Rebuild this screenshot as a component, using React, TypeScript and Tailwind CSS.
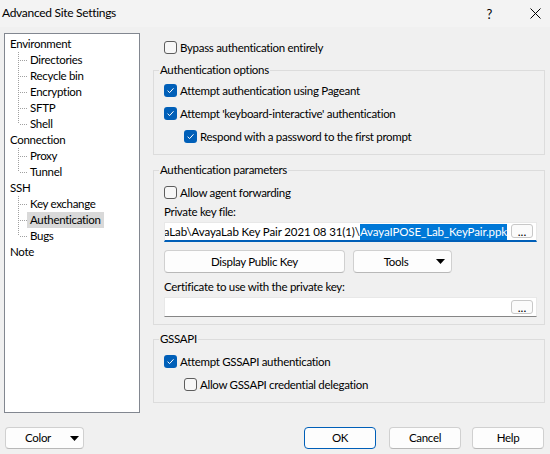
import React from "react";

function Check({ checked }: { checked?: boolean }) {
  return checked ? (
    <span className="w-[13px] h-[13px] rounded-[3px] bg-[#005fb8] flex items-center justify-center shrink-0">
      <svg width="9" height="9" viewBox="0 0 9 9">
        <path d="M1.6 4.7 L3.6 6.6 L7.5 2.3" stroke="white" strokeWidth="1" fill="none" />
      </svg>
    </span>
  ) : (
    <span className="w-[13px] h-[13px] rounded-[3px] border border-[#5d5d5d] bg-[#f7f7f7] shrink-0" />
  );
}

function Row({ checked, label, indent }: { checked?: boolean; label: string; indent?: boolean }) {
  return (
    <div className={indent ? "flex items-center h-[13px] pl-[20px]" : "flex items-center h-[13px]"}>
      <Check checked={checked} />
      <span className="ml-[3px] leading-[16px] whitespace-nowrap">{label}</span>
    </div>
  );
}

function Group({ label, className, children }: { label: string; className: string; children: React.ReactNode }) {
  return (
    <div className={"relative border border-[#dcdcdc] " + className}>
      <span className="absolute -top-[9px] left-[5px] px-[1px] bg-[#f0f0f0] leading-[16px] whitespace-nowrap">{label}</span>
      {children}
    </div>
  );
}

function Caret() {
  return (
    <svg width="9" height="5" viewBox="0 0 9 5">
      <path d="M0 0 H9 L4.5 5 Z" fill="#000" />
    </svg>
  );
}

function Dots() {
  return (
    <span className="w-[22px] h-[14px] mr-[3px] mb-[1px] rounded-[3px] border border-[#c8c8c8] bg-[#fbfbfb] flex items-end justify-center shrink-0 text-[12px] leading-[11px] tracking-normal">
      ...
    </span>
  );
}

function TreeRoot({ label }: { label: string }) {
  return <div className="h-[16px] flex items-center pl-[5px] leading-[16px]">{label}</div>;
}

function TreeChild({ label, last, selected }: { label: string; last?: boolean; selected?: boolean }) {
  return (
    <div className="h-[16px] flex items-center">
      <svg width="22" height="16" viewBox="0 0 22 16" className="shrink-0">
        {Array.from({ length: last ? 4 : 8 }).map((_, i) => (
          <rect key={"v" + i} x="13" y={i * 2} width="1" height="1" fill="#a0a0a0" />
        ))}
        {Array.from({ length: 4 }).map((_, i) => (
          <rect key={"h" + i} x={15 + i * 2} y="8" width="1" height="1" fill="#a0a0a0" />
        ))}
      </svg>
      <span className={selected ? "px-[3px] leading-[16px] bg-[#d9d9d9]" : "px-[3px] leading-[16px]"}>{label}</span>
    </div>
  );
}

export default function App() {
  return (
    <div className="w-[550px] h-[454px] bg-[#f0f0f0] flex flex-col text-[11.5px] tracking-[-0.3px] text-black font-['Lato',sans-serif] overflow-hidden">
      <div className="h-[27px] bg-[#f3f3f3] flex items-center pl-[2px] pr-[9px]">
        <span className="leading-[16px] -mt-[1px] text-[12px]">Advanced Site Settings</span>
        <span className="ml-auto mr-[38px] text-[13px] leading-[16px]">?</span>
        <svg width="11" height="11" viewBox="0 0 11 11">
          <path d="M0.5 0.5 L10.5 10.5 M10.5 0.5 L0.5 10.5" stroke="#000" strokeWidth="1" />
        </svg>
      </div>

      <div className="flex items-start">
        <div className="ml-[4px] mt-[6px] w-[136px] h-[380px] border border-[#828790] bg-white pt-[2px]">
          <TreeRoot label="Environment" />
          <TreeChild label="Directories" />
          <TreeChild label="Recycle bin" />
          <TreeChild label="Encryption" />
          <TreeChild label="SFTP" />
          <TreeChild label="Shell" last />
          <TreeRoot label="Connection" />
          <TreeChild label="Proxy" />
          <TreeChild label="Tunnel" last />
          <TreeRoot label="SSH" />
          <TreeChild label="Key exchange" />
          <TreeChild label="Authentication" selected />
          <TreeChild label="Bugs" last />
          <TreeRoot label="Note" />
        </div>

        <div className="ml-[13px] w-[392px] pt-[14px] flex flex-col">
          <div className="pl-[11px]">
            <Row label="Bypass authentication entirely" />
          </div>

          <Group label="Authentication options" className="mt-[16px] h-[85px] pt-[13px] pl-[10px] flex flex-col gap-[10px]">
            <Row checked label="Attempt authentication using Pageant" />
            <Row checked label="Attempt 'keyboard-interactive' authentication" />
            <Row checked indent label="Respond with a password to the first prompt" />
          </Group>

          <Group label="Authentication parameters" className="mt-[15px] h-[155px] pt-[15px] pl-[10px] pr-[7px] flex flex-col">
            <Row label="Allow agent forwarding" />
            <div className="mt-[5px] h-[16px] leading-[16px]">Private key file:</div>
            <div className="mt-[2px] h-[20px] bg-white border-t border-x border-[#e8e8e8] border-b-2 border-b-[#005fb8] flex items-center">
              <div className="flex-1 min-w-0 overflow-hidden flex justify-end whitespace-nowrap pl-[1px] pr-[4px] tracking-[-0.12px]">
                <span className="leading-[16px]">aLab\AvayaLab Key Pair 2021 08 31(1)\</span>
                <span className="leading-[16px] bg-[#0078d7] text-white">AvayaIPOSE_Lab_KeyPair.ppk</span>
              </div>
              <Dots />
            </div>
            <div className="mt-[8px] h-[23px] flex">
              <div className="w-[181px] h-[23px] rounded-[4px] border border-[#d0d0d0] border-b-[#b8b8b8] bg-[#fdfdfd] flex items-center justify-center">
                Display Public Key
              </div>
              <div className="ml-[8px] w-[99px] h-[23px] rounded-[4px] border border-[#d0d0d0] border-b-[#b8b8b8] bg-[#fdfdfd] flex items-center pr-[6px]">
                <span className="flex-1 text-center pl-[2px]">Tools</span>
                <Caret />
              </div>
            </div>
            <div className="mt-[6px] h-[16px] leading-[16px]">Certificate to use with the private key:</div>
            <div className="mt-[2px] h-[20px] bg-white border border-[#e8e8e8] border-b-[#868686] flex items-center justify-end">
              <Dots />
            </div>
          </Group>

          <Group label="GSSAPI" className="mt-[14px] h-[64px] pt-[15px] pl-[10px] flex flex-col gap-[10px]">
            <Row checked label="Attempt GSSAPI authentication" />
            <Row indent label="Allow GSSAPI credential delegation" />
          </Group>
        </div>
      </div>

      <div className="mt-[14px] flex pl-[5px] pr-[6px]">
        <div className="w-[79px] h-[22px] rounded-[4px] border border-[#d0d0d0] border-b-[#b8b8b8] bg-[#fdfdfd] flex items-center pr-[4px]">
          <span className="flex-1 text-center">Color</span>
          <Caret />
        </div>
        <div className="ml-auto w-[72px] h-[22px] rounded-[4px] border border-[#005fb8] bg-[#fdfdfd] flex items-center justify-center">OK</div>
        <div className="ml-[13px] w-[72px] h-[22px] rounded-[4px] border border-[#d0d0d0] border-b-[#b8b8b8] bg-[#fdfdfd] flex items-center justify-center">Cancel</div>
        <div className="ml-[11px] w-[72px] h-[22px] rounded-[4px] border border-[#d0d0d0] border-b-[#b8b8b8] bg-[#fdfdfd] flex items-center justify-center">Help</div>
      </div>
    </div>
  );
}
